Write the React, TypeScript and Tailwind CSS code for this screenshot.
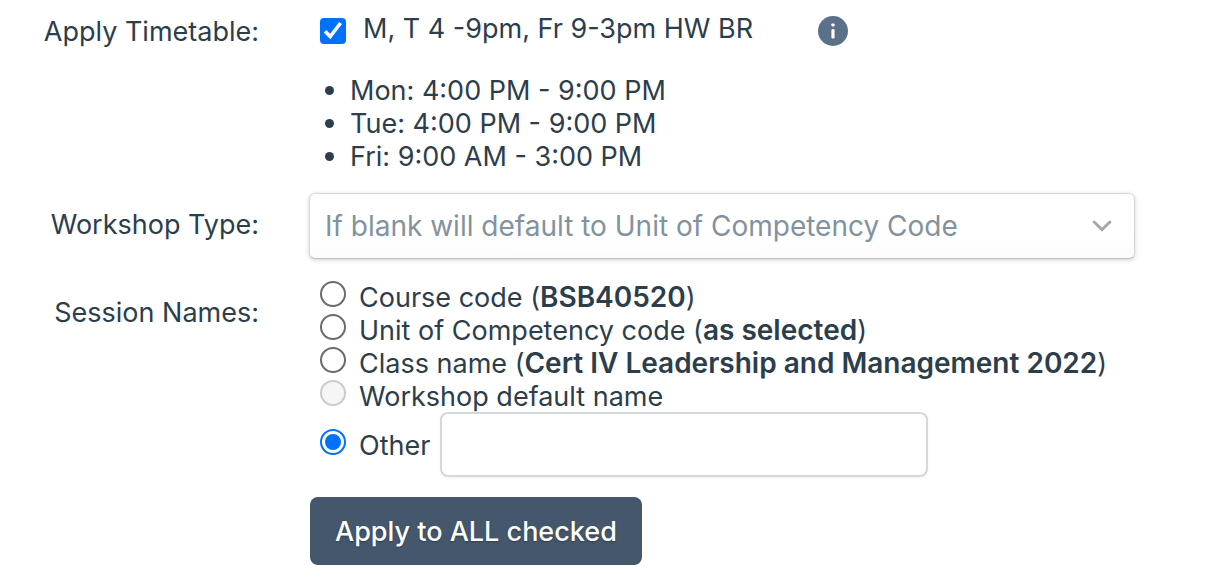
import { useState, type ReactNode } from "react";

const slots = [
  "Mon: 4:00 PM - 9:00 PM",
  "Tue: 4:00 PM - 9:00 PM",
  "Fri: 9:00 AM - 3:00 PM",
];

type Option = { id: string; label: string; detail?: string; disabled?: boolean };

const options: Option[] = [
  { id: "course", label: "Course code", detail: "BSB40520" },
  { id: "unit", label: "Unit of Competency code", detail: "as selected" },
  { id: "class", label: "Class name", detail: "Cert IV Leadership and Management 2022" },
  { id: "workshop", label: "Workshop default name", disabled: true },
];

function Radio(props: { id: string; checked: boolean; disabled?: boolean; onSelect: () => void }) {
  return (
    <span className="mt-px grid size-[26px] shrink-0 place-items-center">
      <input
        type="radio"
        name="session-name"
        id={props.id}
        checked={props.checked}
        disabled={props.disabled}
        onChange={props.onSelect}
        className="peer col-start-1 row-start-1 size-[26px] appearance-none rounded-full border-2 border-[#6b6b6b] bg-white checked:border-[#0070ff] disabled:border-[#cccccc] disabled:bg-[#f6f6f6]"
      />
      <span className="pointer-events-none col-start-1 row-start-1 hidden size-4 rounded-full bg-[#0070ff] peer-checked:block" />
    </span>
  );
}

function Heading({ htmlFor, children }: { htmlFor?: string; children: ReactNode }) {
  return htmlFor ? (
    <label htmlFor={htmlFor} className="pt-[15px] text-right">
      {children}
    </label>
  ) : (
    <span id="session-heading" className="pt-4 text-right">
      {children}
    </span>
  );
}

export default function App() {
  const [applied, setApplied] = useState(true);
  const [session, setSession] = useState("other");
  const [other, setOther] = useState("");

  return (
    <form
      onSubmit={(e) => e.preventDefault()}
      className="grid grid-cols-[259px_minmax(0,1fr)] gap-x-[50px] bg-white pr-[71px] font-['Inter',sans-serif] text-[27px] leading-[33px] text-[#2c3e4c]"
    >
      <Heading htmlFor="timetable">Apply Timetable:</Heading>
      <div className="pt-3 pb-5">
        <div className="flex items-start pl-[11px]">
          <span className="mt-1.5 grid size-[26px] shrink-0 place-items-center">
            <input
              id="timetable"
              type="checkbox"
              checked={applied}
              onChange={(e) => setApplied(e.target.checked)}
              className="peer col-start-1 row-start-1 size-[26px] appearance-none rounded-sm border-2 border-[#6b6b6b] bg-white checked:border-[#0070ff] checked:bg-[#0070ff]"
            />
            <svg
              viewBox="0 0 26 26"
              aria-hidden="true"
              className="pointer-events-none col-start-1 row-start-1 hidden size-[26px] peer-checked:block"
            >
              <path d="M5 13.2l5.2 5.4L20.6 5" fill="none" stroke="#fff" strokeWidth="3.6" />
            </svg>
          </span>
          <label htmlFor="timetable" className="ml-[17px]">
            M, T 4 -9pm, Fr 9-3pm HW BR
          </label>
          <button type="button" aria-label="Timetable details" className="mt-1 ml-[65px]">
            <svg viewBox="0 0 30 30" aria-hidden="true" className="size-[30px]">
              <circle cx="15" cy="15" r="15" fill="#5b7089" />
              <rect x="13.4" y="7.4" width="3.2" height="3" rx="0.8" fill="#fff" />
              <rect x="13.4" y="13" width="3.2" height="9.6" rx="1.4" fill="#fff" />
            </svg>
          </button>
        </div>
        <ul className="mt-7">
          {slots.map((slot) => (
            <li key={slot} className="flex items-center gap-4 pl-4">
              <span className="size-[9px] rounded-full bg-[#2c3e4c]" />
              {slot}
            </li>
          ))}
        </ul>
      </div>

      <Heading htmlFor="workshop-type">Workshop Type:</Heading>
      <div className="grid items-center">
        <select
          id="workshop-type"
          defaultValue=""
          className="col-start-1 row-start-1 h-[66px] w-full appearance-none rounded-md border border-[#d3d9de] border-b-[#b9c2ca] bg-linear-to-b from-white from-60% to-[#fcfcfc] pr-14 pl-[15px] text-[28px] text-[#82929e] shadow-[0_1px_4px_rgba(44,62,80,0.25)]"
        >
          <option value="">If blank will default to Unit of Competency Code</option>
        </select>
        <svg
          viewBox="0 0 20 12"
          aria-hidden="true"
          className="pointer-events-none col-start-1 row-start-1 mr-[23px] h-3 w-5 justify-self-end"
        >
          <path
            d="M2.2 2l7.8 7.6L17.8 2"
            fill="none"
            stroke="#a1a9af"
            strokeWidth="3"
            strokeLinecap="round"
            strokeLinejoin="round"
          />
        </svg>
      </div>

      <div className="mt-[21px] grid">
        <Heading>Session Names:</Heading>
      </div>
      <div className="mt-[21px]">
        <div role="radiogroup" aria-labelledby="session-heading" className="pl-[11px]">
          {options.map((o) => (
            <div key={o.id} className="flex h-[33px] items-start gap-[13px]">
              <Radio
                id={o.id}
                checked={session === o.id}
                disabled={o.disabled}
                onSelect={() => setSession(o.id)}
              />
              <label htmlFor={o.id} className="leading-[35px]">
                {o.label}
                {o.detail && (
                  <>
                    {" "}
                    (<b className="text-[28px] leading-none font-semibold">{o.detail}</b>)
                  </>
                )}
              </label>
            </div>
          ))}
          <div className="flex items-center">
            <div className="flex h-[33px] items-start gap-[13px]">
              <Radio id="other" checked={session === "other"} onSelect={() => setSession("other")} />
              <label htmlFor="other" className="leading-[35px]">
                Other
              </label>
            </div>
            <input
              type="text"
              aria-label="Other session name"
              value={other}
              onChange={(e) => setOther(e.target.value)}
              className="ml-2.5 h-[65px] w-[488px] rounded-lg border-2 border-[#d3d8dd] bg-white px-4 shadow-[0_2px_3px_rgba(44,62,80,0.05)]"
            />
          </div>
        </div>
        <button
          type="submit"
          className="mt-5 ml-px h-[68px] rounded-lg bg-[#44576d] px-[25px] font-medium text-white text-shadow-[0_1px_2px_rgba(0,0,0,0.3)]"
        >
          Apply to ALL checked
        </button>
      </div>
    </form>
  );
}
